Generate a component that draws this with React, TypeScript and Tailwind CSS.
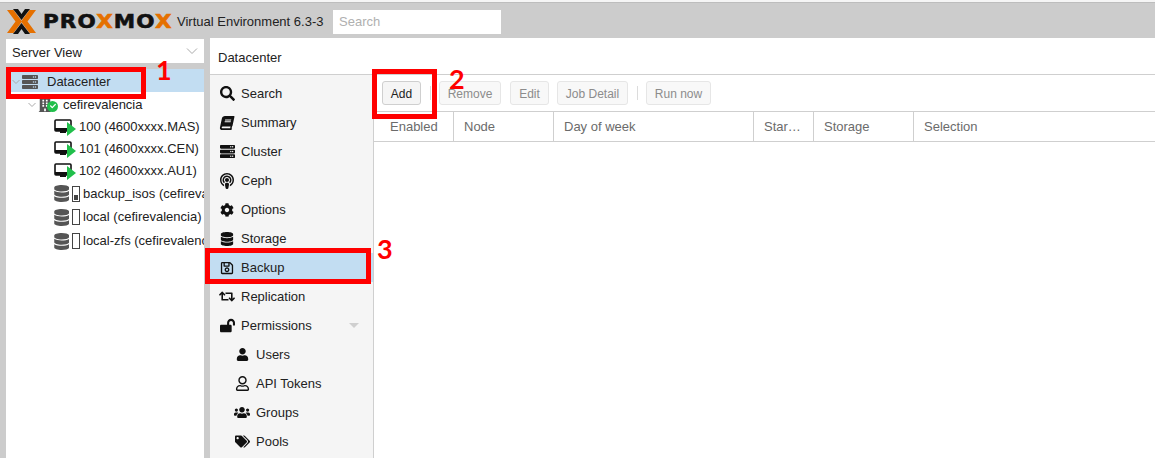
import React from "react";
import {
  FaSearch,
  FaBook,
  FaServer,
  FaPodcast,
  FaCog,
  FaDatabase,
  FaRegSave,
  FaRetweet,
  FaLockOpen,
  FaUser,
  FaRegUser,
  FaUsers,
  FaTags,
  FaCheck,
  FaBuilding,
} from "react-icons/fa";

const LogoMark = () => (
  <svg width="29" height="25" viewBox="0 0 29 25" className="shrink-0">
    <polygon points="0,1 6.5,1 15,12.5 6.5,24 0,24 8.5,12.5" fill="#e57000" />
    <polygon points="29,1 22.5,1 14,12.5 22.5,24 29,24 20.5,12.5" fill="#e57000" />
    <polygon points="6,0 11,0 14.5,5 18,0 23,0 14.5,11" fill="#111" />
    <polygon points="6,25 11,25 14.5,20 18,25 23,25 14.5,14" fill="#111" />
  </svg>
);

const GuestIcon = () => (
  <span className="relative w-[25px] h-[17px] shrink-0">
    <svg width="25" height="17" viewBox="0 0 25 17">
      <rect x="1" y="1" width="16" height="11" rx="1" fill="#fff" stroke="#111" strokeWidth="1.6" />
      <rect x="1" y="9" width="16" height="3" fill="#111" />
      <rect x="6" y="12" width="6" height="2" fill="#111" />
      <polygon points="13,3 22,10 13,17" fill="#21bf4b" />
    </svg>
  </span>
);

const StorageIcon = ({ level }: { level: number }) => (
  <span className="flex items-center gap-[3px] w-[26px] shrink-0">
    <FaDatabase className="text-[#555] text-[17px]" />
    <span className="w-[8px] h-[16px] border border-[#444] flex items-end justify-center p-px">
      {level > 0 && <span className="w-full h-[5px] bg-[#444]" />}
    </span>
  </span>
);

const treeRows = [
  { label: "100 (4600xxxx.MAS)", level: -1, h: "h-[22px]" },
  { label: "101 (4600xxxx.CEN)", level: -1, h: "h-[22px]" },
  { label: "102 (4600xxxx.AU1)", level: -1, h: "h-[22px]" },
  { label: "backup_isos (cefirevalencia)", level: 1, h: "h-[23px]" },
  { label: "local (cefirevalencia)", level: 0, h: "h-[24px]" },
  { label: "local-zfs (cefirevalencia)", level: 0, h: "h-[24px]" },
];

const menu = [
  { label: "Search", icon: <FaSearch className="text-[15px]" /> },
  { label: "Summary", icon: <FaBook className="-skew-x-12" /> },
  { label: "Cluster", icon: <FaServer className="text-[15px]" /> },
  { label: "Ceph", icon: <FaPodcast className="text-[16px]" /> },
  { label: "Options", icon: <FaCog /> },
  { label: "Storage", icon: <FaDatabase /> },
  { label: "Backup", icon: <FaRegSave />, active: true },
  { label: "Replication", icon: <FaRetweet className="text-[17px]" /> },
  { label: "Permissions", icon: <FaLockOpen className="text-[15px]" />, caret: true },
  { label: "Users", icon: <FaUser className="text-[13px]" />, sub: true },
  { label: "API Tokens", icon: <FaRegUser className="text-[15px]" />, sub: true },
  { label: "Groups", icon: <FaUsers className="text-[17px]" />, sub: true },
  { label: "Pools", icon: <FaTags className="text-[15px]" />, sub: true },
];

const columns = [
  { label: "Enabled", w: "w-[80px] pl-4" },
  { label: "Node", w: "w-[100px] pl-[10px]" },
  { label: "Day of week", w: "w-[200px] pl-[10px]" },
  { label: "Star…", w: "w-[60px] pl-[10px]" },
  { label: "Storage", w: "w-[100px] pl-[10px]" },
  { label: "Selection", w: "flex-1 pl-[10px]" },
];

const ToolBtn = ({ label, w, disabled }: { label: string; w: string; disabled?: boolean }) => (
  <button
    className={`h-[24px] pt-px ${w} text-[12px] rounded-[3px] border ${
      disabled ? "border-[#e6e6e6] bg-[#f8f8f8] text-[#8c8c8c]" : "border-[#cfcfcf] bg-[#f5f5f5] text-[#222]"
    }`}
  >
    {label}
  </button>
);

const Sep = ({ ml, mr }: { ml: string; mr: string }) => (
  <span className={`w-px h-[14px] bg-[#dcdcdc] ${ml} ${mr}`} />
);

const markClass =
  "absolute text-[27px] font-bold leading-[34px] text-[#ff0000] [font-family:Lato,sans-serif]";

export default function App() {
  return (
    <div
      className="relative h-[458px] w-[1155px] overflow-hidden bg-[#cccccc] text-[13px] text-[#222]"
      style={{ fontFamily: '"Liberation Sans", Arial, sans-serif' }}
    >
      <div className="h-[3px] bg-[#f5f5f5] border-b border-[#bdbdbd]" />
      <div className="h-[35px] flex items-center pl-[7px] pt-[2px]">
        <LogoMark />
        <div className="ml-[7px] w-[134px]">
          <span
            className="block origin-left scale-x-[1.13] text-[19px] font-bold tracking-[1px] leading-none text-[#111] whitespace-nowrap [-webkit-text-stroke:0.6px_currentColor]"
            style={{ fontFamily: '"DejaVu Sans", sans-serif' }}
          >
            PRO<span className="text-[#e57000]">X</span>MO<span className="text-[#e57000]">X</span>
          </span>
        </div>
        <span className="text-[13px] w-[156px] whitespace-nowrap">Virtual Environment 6.3-3</span>
        <div className="w-[168px] h-[24px] bg-white flex items-center pl-[6px] text-[#b0b0b0]">Search</div>
      </div>

      <div className="flex h-[420px]">
        <div className="w-[198px] ml-[6px] flex flex-col">
          <div className="h-[24px] mt-px bg-white flex items-center justify-between pl-[6px] pr-[6px] pt-[3px] text-[13px]">
            <span>Server View</span>
            <svg width="12" height="8" viewBox="0 0 12 8" className="-mt-[3px]">
              <path d="M1 1.5 L6 6.5 L11 1.5" fill="none" stroke="#aaa" strokeWidth="1" />
            </svg>
          </div>
          <div className="mt-[6px] flex-1 bg-white">
            <div className="h-[23px] bg-[#c2ddf2] flex items-center pl-[6px] pt-[3px]">
              <svg width="8" height="6" viewBox="0 0 8 6" className="mr-[2px]">
                <path d="M0.5 1 L4 4.5 L7.5 1" fill="none" stroke="#aaa" />
              </svg>
              <FaServer className="text-[#555] text-[16px] mr-[9px]" />
              <span>Datacenter</span>
            </div>
            <div className="h-[24px] flex items-center pl-[22px] pt-[1px]">
              <svg width="8" height="6" viewBox="0 0 8 6" className="mr-[2px]">
                <path d="M0.5 1 L4 4.5 L7.5 1" fill="none" stroke="#aaa" />
              </svg>
              <span className="relative w-[20px] h-[14px] mr-[5px]">
                <FaBuilding className="text-[#555] text-[14px]" />
                <span className="absolute left-[9px] top-[3px] w-[11px] h-[11px] rounded-full bg-[#21bf4b] flex items-center justify-center">
                  <FaCheck className="text-white text-[6px]" />
                </span>
              </span>
              <span>cefirevalencia</span>
            </div>
            {treeRows.map((r) => (
              <div key={r.label} className={`${r.h} flex items-center pl-[48px] whitespace-nowrap overflow-hidden`}>
                {r.level < 0 ? <GuestIcon /> : <StorageIcon level={r.level} />}
                <span className={r.level < 0 ? "" : "ml-[3px]"}>{r.label}</span>
              </div>
            ))}
          </div>
        </div>

        <div className="ml-[6px] flex-1 flex flex-col bg-white">
          <div className="h-[33px] shrink-0 flex items-center pl-[8px] pt-[3px] border-b border-[#cfcfcf] text-[13px] box-content">
            Datacenter
          </div>
          <div className="flex flex-1">
            <div className="w-[164px] shrink-0 bg-[#f5f5f5] border-r border-[#cfcfcf] pt-[4px]">
              {menu.map((m) => (
                <div
                  key={m.label}
                  className={`h-[29px] flex items-center ${m.sub ? "pl-[24px]" : "pl-[9px]"} ${
                    m.active ? "bg-[#c2ddf2]" : ""
                  }`}
                >
                  <span className="w-[16px] flex justify-center text-[14px] text-[#111] mr-[6px]">{m.icon}</span>
                  <span>{m.label}</span>
                  {m.caret && (
                    <span className="ml-auto mr-[14px] w-0 h-0 border-x-[5px] border-x-transparent border-t-[5px] border-t-[#cfcfcf]" />
                  )}
                </div>
              ))}
            </div>
            <div className="flex-1 flex flex-col">
              <div className="h-[37px] flex items-center pl-[8px] border-b border-[#cfcfcf]">
                <ToolBtn label="Add" w="w-[39px]" />
                <Sep ml="ml-[9px]" mr="mr-[8px]" />
                <ToolBtn label="Remove" w="w-[62px]" disabled />
                <span className="w-[9px]" />
                <ToolBtn label="Edit" w="w-[39px]" disabled />
                <span className="w-[8px]" />
                <ToolBtn label="Job Detail" w="w-[71px]" disabled />
                <Sep ml="ml-[9px]" mr="mr-[8px]" />
                <ToolBtn label="Run now" w="w-[65px]" disabled />
              </div>
              <div className="h-[30px] flex border-b border-[#cfcfcf] text-[#6b6b6b]">
                {columns.map((c, i) => (
                  <div
                    key={c.label}
                    className={`${c.w} flex items-center pt-px ${i < columns.length - 1 ? "border-r border-[#cfcfcf]" : ""}`}
                  >
                    {c.label}
                  </div>
                ))}
              </div>
              <div className="flex-1 bg-white" />
            </div>
          </div>
        </div>
      </div>

      {/* red markup drawn over the screenshot */}
      <div className="absolute left-[6px] top-[67px] w-[140px] h-[32px] border-[5px] border-[#ff0000]" />
      <div className="absolute left-[372px] top-[69px] w-[65px] h-[50px] border-[5px] border-[#ff0000]" />
      <div className="absolute left-[205px] top-[248px] w-[166px] h-[36px] border-[5px] border-[#ff0000]" />
      <span className={`${markClass} left-[156px] top-[53px]`}>1</span>
      <span className={`${markClass} left-[449px] top-[62px]`}>2</span>
      <span className={`${markClass} left-[377px] top-[232px]`}>3</span>
    </div>
  );
}
